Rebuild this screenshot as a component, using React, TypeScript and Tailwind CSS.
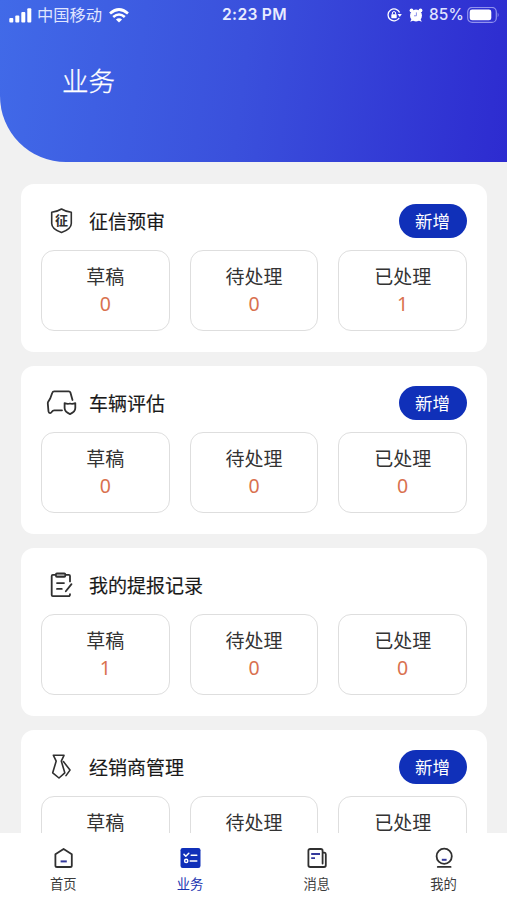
import type { ReactNode } from "react";

type Section = {
  title: string;
  icon: ReactNode;
  canAdd: boolean;
  counts: [number, number, number];
};

const statLabels = ["草稿", "待处理", "已处理"];

function CardIcon({ children }: { children: ReactNode }) {
  return (
    <svg
      viewBox="0 0 32 32"
      className="h-8 w-8 shrink-0"
      fill="none"
      stroke="#303030"
      strokeWidth="1.8"
      strokeLinecap="round"
      strokeLinejoin="round"
    >
      {children}
    </svg>
  );
}

const sections: Section[] = [
  {
    title: "征信预审",
    canAdd: true,
    counts: [0, 0, 1],
    icon: (
      <CardIcon>
        <path
          d="M16.5 4 Q21 6.8 26.3 7.2 V18.5 Q26.3 24.2 16.5 27.4 Q6.7 24.2 6.7 18.5 V7.2 Q12 6.8 16.5 4 Z"
          strokeWidth="1.6"
        />
        <text
          x="16.5"
          y="20.3"
          textAnchor="middle"
          fontSize="13"
          fontWeight="700"
          fill="#303030"
          stroke="none"
        >
          征
        </text>
      </CardIcon>
    ),
  },
  {
    title: "车辆评估",
    canAdd: true,
    counts: [0, 0, 0],
    icon: (
      <CardIcon>
        <path d="M27.5 13 L25.4 5.5 Q25 4.3 23.8 4.3 H9.2 Q7.8 4.3 7.4 5.5 L5.2 11.5 L3.2 14.7 Q2.7 15.7 2.8 16.7 L3.5 24.5 Q3.7 26.2 5.2 26.1 Q6.4 26 7 24.7 Q7.7 23.3 9.2 23.3 H17" />
        <path d="M19.6 16.1 Q22.5 17.3 25 16.5 Q27.5 17.3 30.3 16.1 V21.1 Q30.3 24.9 25 27.1 Q19.6 24.9 19.6 21.1 Z" />
      </CardIcon>
    ),
  },
  {
    title: "我的提报记录",
    canAdd: false,
    counts: [1, 0, 0],
    icon: (
      <CardIcon>
        <path d="M10.5 5.9 H7.8 Q6.7 5.9 6.7 7 V26 Q6.7 27.1 7.8 27.1 H23.6 Q25 27.1 25 25.2" />
        <path d="M20.5 5.9 H23.8 Q25 5.9 25 7.1 V12.4" />
        <rect x="10.9" y="4.4" width="9.4" height="3.4" rx="1" fill="#a5a5a5" />
        <path d="M12 14.1 H19 M12 19.9 H16.8 M26.5 15.1 L20.8 22.3" />
      </CardIcon>
    ),
  },
  {
    title: "经销商管理",
    canAdd: true,
    counts: [0, 0, 0],
    icon: (
      <CardIcon>
        <path
          d="M8.4 4.3 H19 L16.3 10.1 L19.8 21.8 L14 27 L7.7 21.8 L11.2 10.1 Z"
          strokeWidth="1.6"
        />
        <path d="M18.4 10.6 L25 19.1 L21 24.6" strokeWidth="1.6" />
      </CardIcon>
    ),
  },
];

function StatusBar() {
  return (
    <div className="grid h-[30px] grid-cols-[1fr_auto_1fr] items-center pr-[7px] pl-[9px] text-white">
      <div className="flex h-[29px] items-center">
        <svg viewBox="0 0 23 15" className="h-[15px] w-[23px]" fill="currentColor">
          <rect x="0.3" y="10" width="4" height="4.5" rx="1" />
          <rect x="6.3" y="7.5" width="4" height="7" rx="1" />
          <rect x="12.3" y="4" width="4" height="10.5" rx="1" />
          <rect x="18.3" y="0.3" width="4" height="14.2" rx="1" />
        </svg>
        <span className="ml-[5px] pb-[2px] text-[16.3px] leading-[26px] text-[#e0e6ff]">中国移动</span>
        <svg viewBox="0 0 20 15" className="ml-[7px] h-[15px] w-5" fill="none" stroke="currentColor">
          <path d="M1 5.4 Q10 -2.4 19 5.4" strokeWidth="2.7" />
          <path d="M4.2 9 Q10 4 15.8 9" strokeWidth="2.6" />
          <path d="M6.9 11.5 Q10 8.8 13.1 11.5 L10 14.6 Z" fill="currentColor" stroke="none" />
        </svg>
      </div>
      <span className="font-[Inter] text-[15.6px] font-semibold tracking-[0.3px] text-[#e8ecff]">
        2:23 PM
      </span>
      <div className="flex h-[29px] items-center justify-end">
        <svg viewBox="0 0 15 14" className="h-[14px] w-[15px]" fill="none" stroke="currentColor">
          <path d="M12.2 10 A6 6 0 1 1 12.6 4.6" strokeWidth="1.3" />
          <path d="M10.6 6 H14.8 L12.8 9 Z" fill="currentColor" stroke="none" />
          <rect x="4.3" y="6.2" width="5.4" height="4" rx="0.6" fill="currentColor" stroke="none" />
          <path d="M5.4 6.4 V5 Q5.4 3.6 7 3.6 Q8.6 3.6 8.6 5 V6.4" strokeWidth="1" />
        </svg>
        <svg viewBox="0 0 14 14" className="ml-[7px] h-[14px] w-[14px]" fill="currentColor">
          <circle cx="7" cy="7.4" r="6" />
          <circle cx="2.5" cy="2.4" r="1.9" />
          <circle cx="11.5" cy="2.4" r="1.9" />
          <path d="M2.5 11 L1.2 13.7 L4.5 12.5 Z M11.5 11 L12.8 13.7 L9.5 12.5 Z" />
          <path d="M7.4 4.4 V7.8 H5" fill="none" stroke="#7f84e4" strokeWidth="0.9" />
        </svg>
        <span className="ml-[6px] font-[Inter] text-[15.4px] font-medium tracking-[0.2px] text-[#e0e4ff]">
          85%
        </span>
        <svg viewBox="0 0 33 17" className="ml-[3px] h-[17px] w-[33px]">
          <rect x="0.7" y="0.4" width="28.6" height="15" rx="4.5" fill="none" stroke="#9193ee" strokeWidth="1.2" />
          <rect x="2.7" y="2.5" width="21.6" height="10.8" rx="2.4" fill="#fff" />
          <path d="M30.7 5.5 Q32.6 7.9 30.7 10.3 Z" fill="#9193ee" />
        </svg>
      </div>
    </div>
  );
}

function SectionCard({ section }: { section: Section }) {
  return (
    <section className="h-[168px] shrink-0 rounded-[13px] bg-white px-5 pt-[19px]">
      <div className="flex h-[35px] items-center pl-1">
        {section.icon}
        <h2 className="ml-3 text-[19px] leading-[34px] font-normal text-[#191919] [-webkit-text-stroke:0.15px_#191919]">
          {section.title}
        </h2>
        {section.canAdd ? (
          <button className="ml-auto h-[34px] w-[68px] rounded-full bg-[#1030b9] pr-px pb-px text-[17.5px] leading-[33px] text-white">
            新增
          </button>
        ) : null}
      </div>
      <div className="mt-3 grid grid-cols-3 gap-5">
        {section.counts.map((count, i) => (
          <div
            key={statLabels[i]}
            className="flex h-[81px] flex-col items-center rounded-[13px] border border-[#dedede] pt-[11px]"
          >
            <span className="text-[19px] leading-7 text-[#333]">{statLabels[i]}</span>
            <span className="font-['Noto_Sans'] text-[19.5px] leading-7 text-[#d9714f]">{count}</span>
          </div>
        ))}
      </div>
    </section>
  );
}

function TabItem({ label, active, children }: { label: string; active?: boolean; children: ReactNode }) {
  return (
    <button className="flex flex-1 flex-col items-center pt-[14px]">
      <svg
        viewBox="0 0 22 22"
        className="h-[22px] w-[22px]"
        fill="none"
        stroke="#303030"
        strokeWidth="1.8"
        strokeLinejoin="round"
        strokeLinecap="round"
      >
        {children}
      </svg>
      <span className={`mt-[5px] text-[13.3px] leading-5 ${active ? "text-[#1b35b0]" : "text-[#3c3c3c]"}`}>
        {label}
      </span>
    </button>
  );
}

function TabBar() {
  return (
    <nav className="flex h-[67px] shrink-0 bg-white">
      <TabItem label="首页">
        <path d="M3.4 7.2 L11.6 2 L19.8 7.2 V18.4 Q19.8 20 18.2 20 H5 Q3.4 20 3.4 18.4 Z" />
        <path d="M8.6 14.4 H14.8" stroke="#34399b" strokeLinecap="butt" strokeWidth="2" />
      </TabItem>
      <TabItem label="业务" active>
        <rect x="1.5" y="1" width="20" height="20" rx="2.2" fill="#1030b9" stroke="none" />
        <g stroke="#fff" strokeWidth="1.5">
          <path d="M5 7.4 L6.8 9.2 L9.8 6.3" />
          <path d="M12.2 8.2 H17.8 M11.2 13.9 H17.8" />
          <circle cx="7.2" cy="13.9" r="1.6" />
        </g>
      </TabItem>
      <TabItem label="消息">
        <path d="M16.6 16.5 V3.8 Q16.6 2 14.8 2 H4.2 Q2.4 2 2.4 3.8 V18.3 Q2.4 20 4.2 20 H18 Q19.8 20 19.8 18.3 V7.2 Q19.8 5.8 18.4 5.6 H17" />
        <path d="M5.2 7 H14 M5.2 11.1 H9" stroke="#34399b" strokeLinecap="butt" />
      </TabItem>
      <TabItem label="我的">
        <circle cx="11.2" cy="9.2" r="7.6" />
        <path d="M4.8 19.9 H17.6" />
        <path d="M8.8 12.8 H13.6" stroke="#34399b" strokeLinecap="butt" strokeWidth="2" />
      </TabItem>
    </nav>
  );
}

export default function App() {
  return (
    <div className="flex h-[900px] w-full flex-col overflow-hidden bg-[#f1f1f1] font-['Noto_Sans_CJK_SC',sans-serif]">
      <header className="h-[162px] shrink-0 rounded-bl-[66px] bg-[linear-gradient(97deg,#416ae8_0%,#3a50dc_48%,#2d2bd0_100%)]">
        <StatusBar />
        <h1 className="mt-[30px] ml-[62px] text-[26.5px] leading-10 font-light text-white [-webkit-text-stroke:0.3px_white]">
          业务
        </h1>
      </header>
      <main className="flex min-h-0 flex-1 flex-col gap-[14px] overflow-hidden pt-[22px] pr-5 pl-[21px]">
        {sections.map((section) => (
          <SectionCard key={section.title} section={section} />
        ))}
      </main>
      <TabBar />
    </div>
  );
}
